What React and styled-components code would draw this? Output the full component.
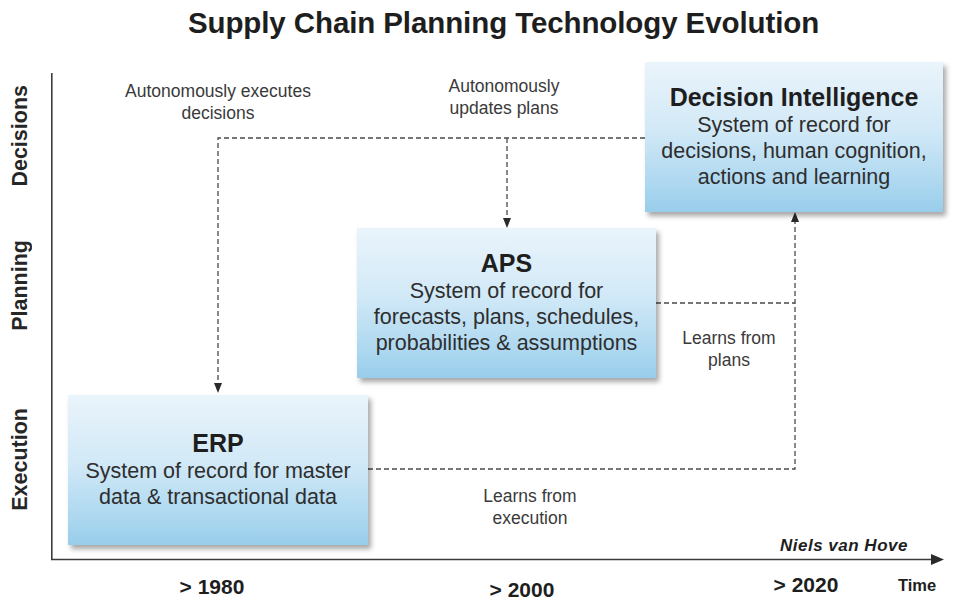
import React from "react";
import styled, { createGlobalStyle } from "styled-components";

const GlobalStyle = createGlobalStyle`
  html, body {
    margin: 0;
    padding: 0;
    background: #ffffff;
  }
  body {
    font-family: "Liberation Sans", Arial, sans-serif;
    color: #222;
  }
`;

const boxes = [
  {
    title: "Decision Intelligence",
    lines: ["System of record for", "decisions, human cognition,", "actions and learning"],
    x: 594,
    y: 2,
    w: 298,
  },
  {
    title: "APS",
    lines: ["System of record for", "forecasts, plans, schedules,", "probabilities & assumptions"],
    x: 306,
    y: 168,
    w: 299,
  },
  {
    title: "ERP",
    lines: ["System of record for master", "data & transactional data"],
    x: 17,
    y: 335,
    w: 300,
  },
];

const notes = [
  { lines: ["Autonomously executes", "decisions"], x: 167, y: 20 },
  { lines: ["Autonomously", "updates plans"], x: 453, y: 15 },
  { lines: ["Learns from", "plans"], x: 678, y: 267 },
  { lines: ["Learns from", "execution"], x: 479, y: 425 },
];

const ticks = [
  { label: "> 1980", x: 161, y: 16 },
  { label: "> 2000", x: 471, y: 19 },
  { label: "> 2020", x: 755, y: 14 },
];

const lanes = [
  { label: "Decisions", h: 152 },
  { label: "Planning", h: 146 },
  { label: "Execution", h: 202 },
];

const DownArrow = ({ x, y }) => (
  <polygon points={`${x - 4},${y - 10} ${x + 4},${y - 10} ${x},${y}`} fill="#2a2a2a" />
);

const UpArrow = ({ x, y }) => (
  <polygon points={`${x - 4},${y + 10} ${x + 4},${y + 10} ${x},${y}`} fill="#2a2a2a" />
);

const Connectors = () => (
  <Svg width="914" height="500" viewBox="0 0 914 500">
    <g fill="none" stroke="#4a4a4a" strokeWidth="1.3" strokeDasharray="5 3">
      <path d="M594 78 H167 V324" />
      <path d="M456 78 V159" />
      <path d="M605 243 H744" />
      <path d="M317 409 H744 V161" />
    </g>
    <DownArrow x={167} y={333} />
    <DownArrow x={456} y={168} />
    <UpArrow x={744} y={152} />
    <g stroke="#3c3c3c" strokeWidth="1.6" fill="none">
      <path d="M0.8 13 V499.5" />
      <path d="M0 499.5 H884" />
    </g>
    <polygon points="880,494 893,499.5 880,505" fill="#2a2a2a" />
  </Svg>
);

const App = () => {
  return (
    <Page>
      <GlobalStyle />
      <Title>Supply Chain Planning Technology Evolution</Title>
      <Chart>
        <YAxis>
          {lanes.map((lane) => (
            <Lane key={lane.label} $h={lane.h}>
              <LaneLabel>{lane.label}</LaneLabel>
            </Lane>
          ))}
        </YAxis>

        <Plot>
          <Connectors />

          {notes.map((note) => (
            <Note key={note.lines[0] + note.x} style={{ left: note.x, top: note.y }}>
              {note.lines.map((line) => (
                <div key={line}>{line}</div>
              ))}
            </Note>
          ))}

          {boxes.map((box) => (
            <Box key={box.title} style={{ left: box.x, top: box.y, width: box.w }}>
              <BoxTitle>{box.title}</BoxTitle>
              {box.lines.map((line) => (
                <BoxLine key={line}>{line}</BoxLine>
              ))}
            </Box>
          ))}

          <Author>Niels van Hove</Author>
        </Plot>

        <Corner />

        <XAxis>
          {ticks.map((tick) => (
            <Tick key={tick.label} style={{ left: tick.x, top: tick.y }}>
              {tick.label}
            </Tick>
          ))}
          <TimeLabel>Time</TimeLabel>
        </XAxis>
      </Chart>
    </Page>
  );
};

const Page = styled.div`
  width: 965px;
  height: 605px;
  overflow: hidden;
  background: #fff;
`;

const Title = styled.h1`
  margin: 0;
  height: 60px;
  box-sizing: border-box;
  padding: 8px 0 0 42px;
  text-align: center;
  font-size: 29.5px;
  line-height: 1;
  font-weight: 700;
  color: #1e1e1e;
  letter-spacing: -0.1px;
`;

const Chart = styled.div`
  display: grid;
  grid-template-columns: 51px 914px;
  grid-template-rows: 500px 45px;
`;

const YAxis = styled.div`
  display: flex;
  flex-direction: column;
`;

const Lane = styled.div`
  height: ${(p) => p.$h}px;
  display: flex;
  align-items: center;
  justify-content: center;
  padding-right: 11px;
`;

const LaneLabel = styled.span`
  writing-mode: vertical-rl;
  transform: rotate(180deg);
  font-size: 21.5px;
  font-weight: 700;
  color: #262626;
  white-space: nowrap;
`;

const Plot = styled.div`
  position: relative;
`;

const Svg = styled.svg`
  position: absolute;
  left: 0;
  top: 0;
  overflow: visible;
`;

const Note = styled.div`
  position: absolute;
  transform: translateX(-50%);
  text-align: center;
  font-size: 17.5px;
  line-height: 22px;
  color: #3a3a3a;
  white-space: nowrap;
`;

const Box = styled.div`
  position: absolute;
  height: 150px;
  box-sizing: border-box;
  display: flex;
  flex-direction: column;
  align-items: center;
  justify-content: center;
  padding-bottom: 2px;
  background: linear-gradient(to bottom, #eaf4fb 0%, #d2e9f7 45%, #a9d6ef 85%, #98cdeb 100%);
  box-shadow: 3px 4px 5px rgba(0, 0, 0, 0.35);
  text-align: center;
  white-space: nowrap;
`;

const BoxTitle = styled.div`
  font-size: 25px;
  line-height: 30px;
  font-weight: 700;
  color: #1e1e1e;
`;

const BoxLine = styled.div`
  font-size: 21.5px;
  line-height: 26px;
  color: #2e2e2e;
`;

const Author = styled.div`
  position: absolute;
  left: 729px;
  top: 477px;
  font-size: 17px;
  line-height: 1;
  font-weight: 700;
  font-style: italic;
  letter-spacing: 0.5px;
  color: #1e1e1e;
`;

const Corner = styled.div``;

const XAxis = styled.div`
  position: relative;
`;

const Tick = styled.div`
  position: absolute;
  transform: translateX(-50%);
  font-size: 21px;
  line-height: 1;
  font-weight: 700;
  color: #1e1e1e;
  white-space: nowrap;
`;

const TimeLabel = styled.div`
  position: absolute;
  left: 847px;
  top: 17px;
  font-size: 16.5px;
  line-height: 1;
  font-weight: 700;
  color: #1e1e1e;
`;

export default App;
